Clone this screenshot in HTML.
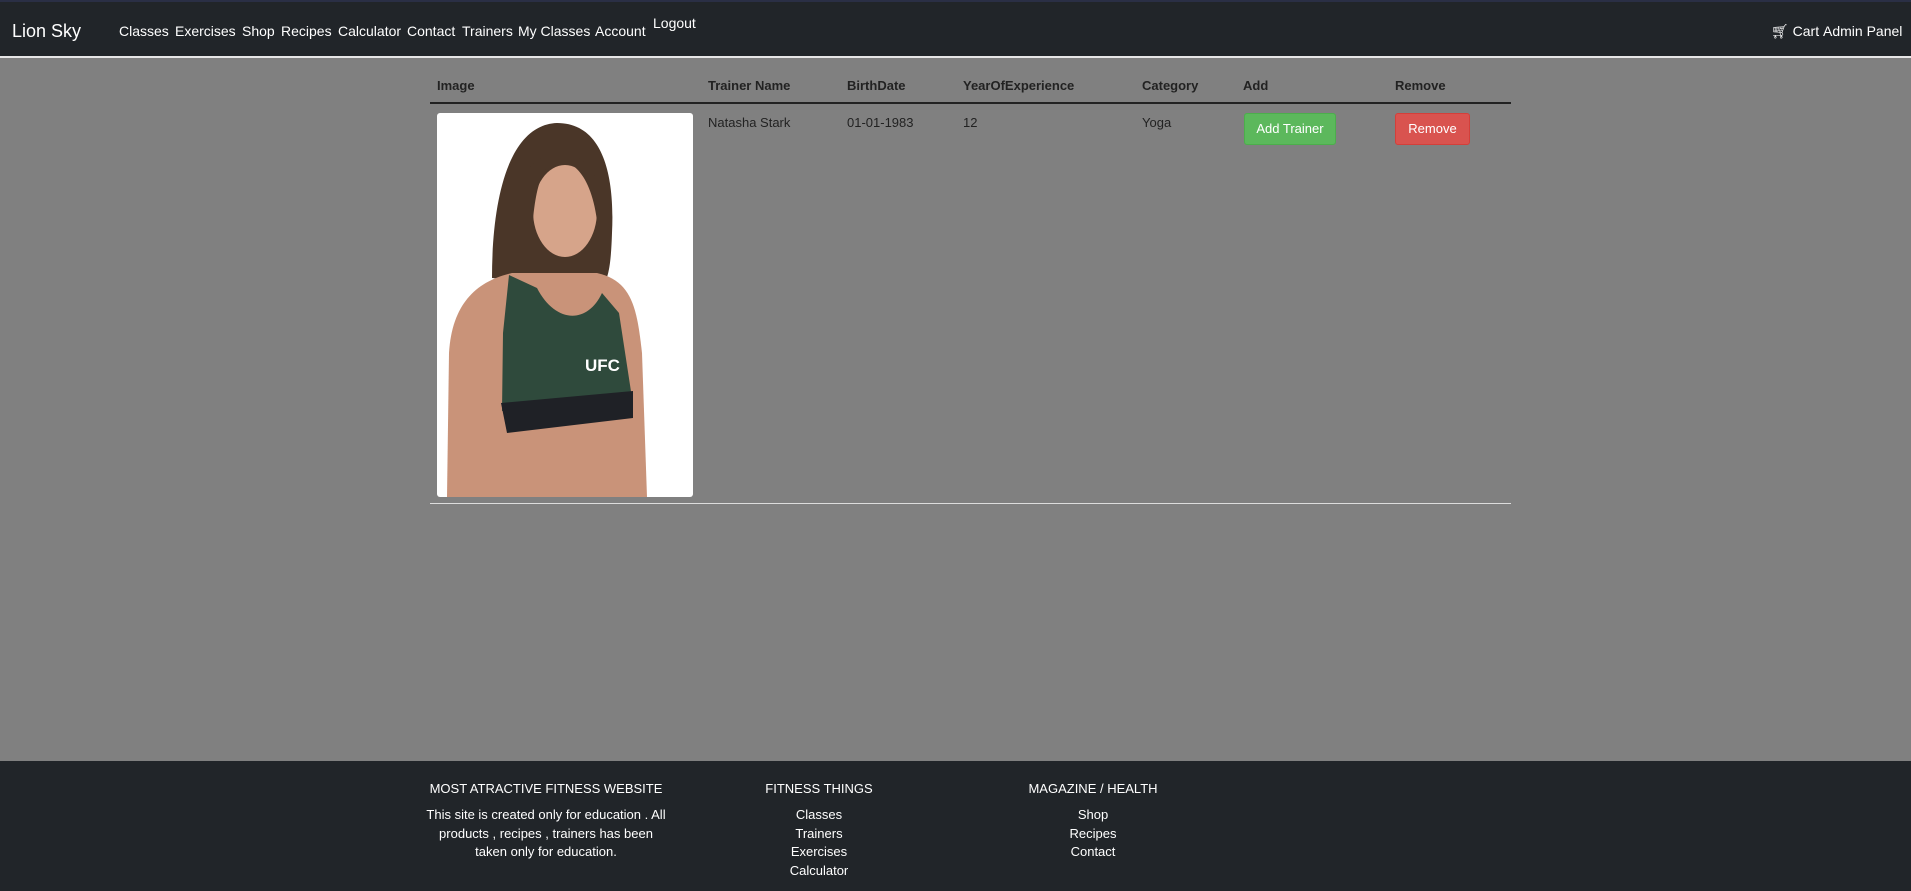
<!DOCTYPE html>
<html><head><meta charset="utf-8"><style>
*{margin:0;padding:0;box-sizing:border-box}
body{width:1911px;height:891px;background:#808080;font-family:"Liberation Sans",Arial,sans-serif;position:relative;overflow:hidden}
.nav{position:absolute;left:0;top:0;width:1911px;height:58px;background:#212529;border-top:2px solid #2a2f45;border-bottom:2px solid #e6e6e6}
.a{position:absolute;color:#fff;font-size:14px;white-space:nowrap}
.t{position:absolute;color:#222;font-size:13px;white-space:nowrap}
.th{font-weight:bold}
.btn{position:absolute;color:#fff;font-size:13px;text-align:center;line-height:30px;border-radius:3px;height:32px}
.foot{position:absolute;left:0;top:761px;width:1911px;height:130px;background:#212529}
.fc{position:absolute;color:#fff;font-size:13px;text-align:center;line-height:18.5px}
.fh{position:absolute;color:#fff;font-size:13px;text-align:center}
</style></head><body>
<div class="nav">
<span class="a" style="left:12px;top:19px;font-size:18px">Lion Sky</span>
<span class="a" style="left:119px;top:21px">Classes</span>
<span class="a" style="left:175px;top:21px">Exercises</span>
<span class="a" style="left:242px;top:21px">Shop</span>
<span class="a" style="left:281px;top:21px">Recipes</span>
<span class="a" style="left:338px;top:21px">Calculator</span>
<span class="a" style="left:407px;top:21px">Contact</span>
<span class="a" style="left:462px;top:21px">Trainers</span>
<span class="a" style="left:518px;top:21px">My Classes</span>
<span class="a" style="left:595px;top:21px">Account</span>
<span class="a" style="left:653px;top:13px">Logout</span>
<span class="a" style="left:1771px;top:21px">&#128722;&#xFE0E; Cart</span>
<span class="a" style="left:1823px;top:21px">Admin Panel</span>
</div>

<span class="t th" style="left:437px;top:78px">Image</span>
<span class="t th" style="left:708px;top:78px">Trainer Name</span>
<span class="t th" style="left:847px;top:78px">BirthDate</span>
<span class="t th" style="left:963px;top:78px">YearOfExperience</span>
<span class="t th" style="left:1142px;top:78px">Category</span>
<span class="t th" style="left:1243px;top:78px">Add</span>
<span class="t th" style="left:1395px;top:78px">Remove</span>
<div style="position:absolute;left:430px;top:102px;width:1081px;height:2px;background:#222"></div>
<span class="t" style="left:708px;top:115px">Natasha Stark</span>
<span class="t" style="left:847px;top:115px">01-01-1983</span>
<span class="t" style="left:963px;top:115px">12</span>
<span class="t" style="left:1142px;top:115px">Yoga</span>
<div class="btn" style="left:1244px;top:113px;width:92px;background:#5cb85c;border:1px solid #4cae4c">Add Trainer</div>
<div class="btn" style="left:1395px;top:113px;width:75px;background:#d9534f;border:1px solid #d43f3a">Remove</div>
<div style="position:absolute;left:437px;top:113px;width:256px;height:384px;background:#fff;border-radius:3px;overflow:hidden">
<svg width="256" height="384" viewBox="0 0 256 384">
<path d="M55 165 C55 90 70 12 120 10 C165 10 178 60 175 120 C174 150 172 160 168 170 L110 170 Z" fill="#4a3628"/>
<path d="M12 240 C15 190 40 168 75 160 L160 160 C195 168 200 195 205 240 L210 384 L10 384 Z" fill="#c99379"/>
<ellipse cx="128" cy="98" rx="32" ry="46" fill="#d6a48a"/>
<path d="M90 60 C100 35 150 30 160 70 L162 140 C162 75 142 48 122 48 C102 50 96 85 94 140 Z" fill="#4a3628"/>
<path d="M72 162 L100 175 C118 210 150 212 165 180 L182 200 L195 285 L65 298 L66 220 Z" fill="#2f4a3c"/>
<path d="M64 290 L196 278 L196 305 L70 320 Z" fill="#1f2126"/>
<text x="148" y="258" font-family="Liberation Sans" font-weight="bold" font-size="17" fill="#fff">UFC</text>
</svg></div>
<div style="position:absolute;left:430px;top:503px;width:1081px;height:1px;background:#ddd"></div>

<div class="foot">
<div class="fh" style="left:396px;top:20px;width:300px">MOST ATRACTIVE FITNESS WEBSITE</div>
<div class="fc" style="left:421px;top:45px;width:250px">This site is created only for education . All<br>products , recipes , trainers has been<br>taken only for education.</div>
<div class="fh" style="left:719px;top:20px;width:200px">FITNESS THINGS</div>
<div class="fc" style="left:719px;top:45px;width:200px">Classes<br>Trainers<br>Exercises<br>Calculator</div>
<div class="fh" style="left:993px;top:20px;width:200px">MAGAZINE / HEALTH</div>
<div class="fc" style="left:993px;top:45px;width:200px">Shop<br>Recipes<br>Contact</div>
</div>
</body></html>
